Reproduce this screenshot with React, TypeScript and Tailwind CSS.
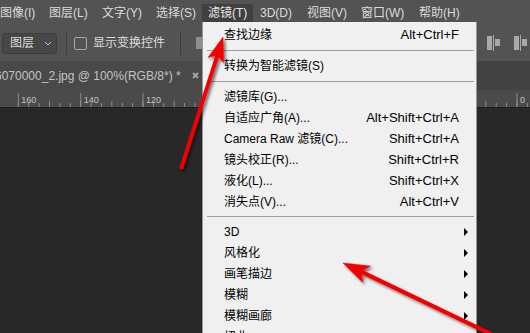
import React from 'react';

const FONT = '"Liberation Sans", "Noto Sans CJK SC", sans-serif';

type Item =
  | { kind: 'item'; label: string; shortcut?: string; sub?: boolean }
  | { kind: 'sep'; h: number };

const MENU: Item[] = [
  { kind: 'item', label: '查找边缘', shortcut: 'Alt+Ctrl+F' },
  { kind: 'sep', h: 10 },
  { kind: 'item', label: '转换为智能滤镜(S)' },
  { kind: 'sep', h: 10 },
  { kind: 'item', label: '滤镜库(G)...' },
  { kind: 'item', label: '自适应广角(A)...', shortcut: 'Alt+Shift+Ctrl+A' },
  { kind: 'item', label: 'Camera Raw 滤镜(C)...', shortcut: 'Shift+Ctrl+A' },
  { kind: 'item', label: '镜头校正(R)...', shortcut: 'Shift+Ctrl+R' },
  { kind: 'item', label: '液化(L)...', shortcut: 'Shift+Ctrl+X' },
  { kind: 'item', label: '消失点(V)...', shortcut: 'Alt+Ctrl+V' },
  { kind: 'sep', h: 9 },
  { kind: 'item', label: '3D', sub: true },
  { kind: 'item', label: '风格化', sub: true },
  { kind: 'item', label: '画笔描边', sub: true },
  { kind: 'item', label: '模糊', sub: true },
  { kind: 'item', label: '模糊画廊', sub: true },
  { kind: 'item', label: '扭曲', sub: true },
];

const TOP = [
  { label: '图像(I)', w: 'w-[49px]', pl: 'pl-0' },
  { label: '图层(L)', w: 'w-[53px]', pl: 'pl-0' },
  { label: '文字(Y)', w: 'w-[54px]', pl: 'pl-0' },
  { label: '选择(S)', w: 'w-[46px]', pl: 'pl-0' },
  { label: '滤镜(T)', w: 'w-[51px]', pl: 'pl-[6px]', active: true },
  { label: '3D(D)', w: 'w-[54px]', pl: 'pl-[7px]' },
  { label: '视图(V)', w: 'w-[54px]', pl: 'pl-0' },
  { label: '窗口(W)', w: 'w-[58px]', pl: 'pl-0' },
  { label: '帮助(H)', w: 'w-[60px]', pl: 'pl-0' },
];

function Ruler() {
  const step = 62.33;
  const majors = Array.from({ length: 9 }, (_, i) => 517 - i * step);
  const minors: number[] = [];
  for (let x = 517 - 8 * step; x < 530; x += step / 6) minors.push(x);
  return (
    <svg width="530" height="17" className="block">
      {minors.map((x, i) => (
        <line key={i} x1={x} x2={x} y1={i % 3 === 0 ? 11 : 13} y2="17" stroke="#8c8c8c" strokeWidth="1" />
      ))}
      {majors.map((x, i) => (
        <g key={'m' + i}>
          <line x1={x} x2={x} y1="3" y2="17" stroke="#8c8c8c" strokeWidth="1" />
          <text x={x + 3} y="13" fontSize="9" fill="#c6c6c6" fontFamily="Liberation Sans, sans-serif">
            {i * 20}
          </text>
        </g>
      ))}
    </svg>
  );
}

function AlignIcon({ flip }: { flip?: boolean }) {
  return (
    <svg width="13" height="16" viewBox="0 0 13 16" className={flip ? 'scale-x-[-1]' : ''}>
      <rect x="0" y="1" width="5" height="14" fill="#a9a9a9" />
      <rect x="6" y="0" width="1" height="16" fill="#a9a9a9" />
      <rect x="8" y="4" width="5" height="7" fill="#a9a9a9" />
    </svg>
  );
}

function Arrows() {
  return (
    <svg width="530" height="333" className="absolute left-0 top-0 pointer-events-none">
      <defs>
        <filter id="sh" x="-20%" y="-20%" width="140%" height="140%">
          <feDropShadow dx="2" dy="2" stdDeviation="1.6" floodColor="#000" floodOpacity="0.55" />
        </filter>
      </defs>
      <g filter="url(#sh)" fill="#f20000" stroke="#f20000">
        <line x1="181" y1="169" x2="217.5" y2="55" strokeWidth="4" />
        <polygon points="223,37 223.5,62.5 217.2,55.1 208,57.5" strokeWidth="0.5" />
        <line x1="545" y1="360" x2="361" y2="271.6" strokeWidth="4" />
        <polygon points="343,263 370.4,266.1 361,271.6 362.6,282.3" strokeWidth="0.5" />
      </g>
    </svg>
  );
}

export default function App() {
  return (
    <div className="relative w-[530px] h-[333px] overflow-hidden bg-[#282828] flex flex-col" style={{ fontFamily: FONT }}>
      {/* menu bar */}
      <div className="h-[25px] bg-[#535353] flex items-start text-[12px] text-[#dcdcdc] shrink-0">
        {TOP.map((t) => (
          <div
            key={t.label}
            className={`${t.w} ${t.pl} mt-[4px] h-[18px] flex items-center shrink-0 leading-none ${t.active ? 'bg-[#404040] text-[#e8e8e8]' : ''}`}
          >
            {t.label}
          </div>
        ))}
      </div>

      {/* options bar */}
      <div className="h-[36px] bg-[#535353] flex items-center shrink-0 text-[12px] text-[#dcdcdc]">
        <div className="ml-[2px] w-[55px] h-[21px] rounded-[3px] border border-[#3c3c3c] bg-[#474747] flex items-center pl-[7px] pr-[4px]">
          <span className="flex-1 leading-none">图层</span>
          <svg width="8" height="5" viewBox="0 0 8 5">
            <path d="M1 1 L4 4 L7 1" fill="none" stroke="#bdbdbd" strokeWidth="1" />
          </svg>
        </div>
        <div className="ml-[9px] w-px h-[24px] bg-[#3e3e3e]" />
        <div className="ml-[7px] w-[13px] h-[13px] rounded-[2px] border border-[#a8a8a8]" />
        <span className="ml-[6px] leading-none">显示变换控件</span>
        <div className="ml-[15px] w-px h-[24px] bg-[#3e3e3e]" />
        <div className="ml-[15px] w-[6px] h-[12px] bg-[#8e8e8e]" />
        <div className="ml-auto mr-[3px] flex items-center gap-[14px]">
          <AlignIcon />
          <AlignIcon />
        </div>
      </div>

      {/* document tabs */}
      <div className="h-[29px] bg-[#424242] flex shrink-0">
        <div className="w-[205px] bg-[#494949] flex items-center text-[12px] text-[#c4c4c4] overflow-hidden">
          <span className="ml-[-5px] whitespace-nowrap leading-none">6070000_2.jpg @ 100%(RGB/8*) *</span>
          <svg width="7" height="7" viewBox="0 0 7 7" className="ml-[11px] shrink-0">
            <path d="M1 1 L6 6 M6 1 L1 6" stroke="#a8a8a8" strokeWidth="1.8" />
          </svg>
        </div>
      </div>

      {/* ruler */}
      <div className="h-[17px] bg-[#4a4a4a] shrink-0 border-b border-[#1f1f1f] box-content">
        <Ruler />
      </div>

      <div className="flex-1 bg-[#282828]" />

      {/* filter menu */}
      <div className="absolute left-[202px] top-[22px] w-[275px] h-[320px] bg-[#f0f0f0] border-l border-r border-[#979797] pt-[2px] text-black">
        {MENU.map((m, i) =>
          m.kind === 'sep' ? (
            <div key={i} className="flex items-center pl-[4px] pr-[2px]" style={{ height: m.h }}>
              <div className="w-full h-px bg-[#a0a0a0]" />
            </div>
          ) : (
            <div key={i} className="h-[21px] flex items-center pl-[21px]">
              <span className="flex-1 text-[12px] leading-none whitespace-nowrap">{m.label}</span>
              {m.shortcut && <span className="text-[13px] leading-none whitespace-nowrap">{m.shortcut}</span>}
              <div className="w-[17px] h-full flex items-center pl-[5px]">
                {m.sub && <div className="w-0 h-0 border-y-[4px] border-y-transparent border-l-[4px] border-l-black" />}
              </div>
            </div>
          )
        )}
      </div>

      <Arrows />
    </div>
  );
}
